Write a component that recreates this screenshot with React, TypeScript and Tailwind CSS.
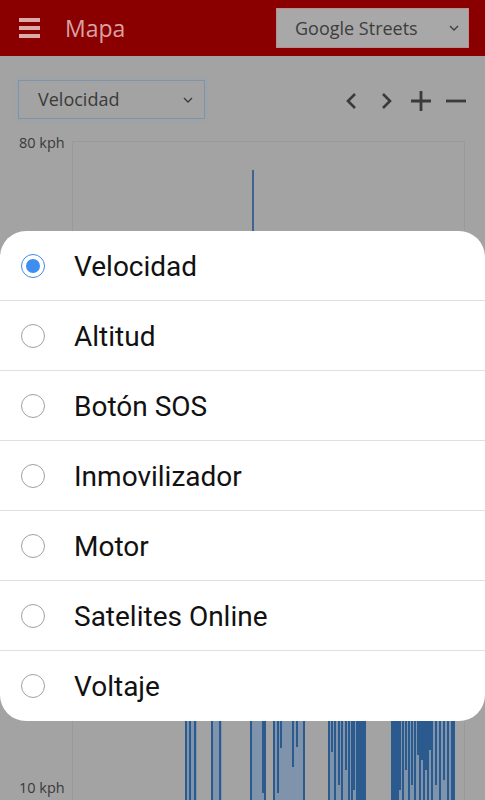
import React from "react";

const options = ["Velocidad", "Altitud", "Botón SOS", "Inmovilizador", "Motor", "Satelites Online", "Voltaje"];

type Grp = { x0: number; x1: number; lines: [number, number][] };
const groups: Grp[] = [
  { x0: 185, x1: 197, lines: [[186, 800], [190, 800], [195, 800]] },
  { x0: 211, x1: 222, lines: [[212, 800], [220, 800]] },
  { x0: 250, x1: 266, lines: [[251, 800], [263, 793], [265, 800]] },
  { x0: 273, x1: 305, lines: [[274, 800], [278, 793], [281, 748], [293, 767], [297, 747], [304, 800]] },
  {
    x0: 328,
    x1: 366,
    lines: [[329, 800], [332, 752], [335, 800], [339, 785], [342, 800], [346, 770], [349, 800], [352, 800], [354, 790], [357, 800], [359, 800], [361, 800], [363, 800], [365, 800]],
  },
  {
    x0: 392,
    x1: 455,
    lines: [[392, 800], [394, 800], [396, 800], [398, 800], [400, 790], [403, 800], [406, 770], [409, 800], [412, 785], [415, 800], [418, 755], [420, 800], [422, 760], [424, 800], [426, 770], [428, 800], [430, 750], [432, 800], [436, 785], [440, 800], [444, 780], [448, 800], [452, 800], [454, 800]],
  },
];

function Radio({ on }: { on: boolean }) {
  return on ? (
    <div className="w-[24px] h-[24px] rounded-full border-[1.5px] border-[#3d8ae6] flex items-center justify-center">
      <div className="w-[14px] h-[14px] rounded-full bg-[#3e8ef0]" />
    </div>
  ) : (
    <div className="w-[24px] h-[24px] rounded-full border-[1.5px] border-[#a0a0a0]" />
  );
}

export default function App() {
  return (
    <div className="relative w-[485px] h-[800px] overflow-hidden bg-[#a3a3a3]" style={{ fontFamily: "'Open Sans', sans-serif" }}>
      <div className="h-[56px] bg-[#8a0000] flex items-center">
        <div className="ml-[19px] w-[21px] flex flex-col gap-[4px]">
          <div className="h-[4px] bg-[#dcaaaa]" />
          <div className="h-[4px] bg-[#dcaaaa]" />
          <div className="h-[4px] bg-[#dcaaaa]" />
        </div>
        <div className="ml-[25px] text-[23px] text-[#d8a2a2] leading-none">Mapa</div>
        <div className="ml-auto mr-[16px] w-[193px] h-[40px] bg-[#a8a8a8] border border-[#b89090] flex items-center pl-[18px] pr-[8px]">
          <span className="text-[18px] text-[#3d3d3d]">Google Streets</span>
          <svg className="ml-auto" width="12" height="8" viewBox="0 0 12 8">
            <path d="M2 2 L6 6 L10 2" stroke="#3d3d3d" strokeWidth="1.3" fill="none" />
          </svg>
        </div>
      </div>

      <div className="flex items-center mt-[24px] pl-[18px] pr-[18px]">
        <div className="w-[187px] h-[39px] border border-[#7f94a8] shadow-[0_0_3px_#8ea2b8] flex items-center pl-[19px] pr-[10px]">
          <span className="text-[18px] text-[#3a3a3a]">Velocidad</span>
          <svg className="ml-auto" width="12" height="8" viewBox="0 0 12 8">
            <path d="M2 2 L6 6 L10 2" stroke="#3a3a3a" strokeWidth="1.3" fill="none" />
          </svg>
        </div>
        <div className="ml-auto flex items-center gap-[12px] text-[#3a3a3a] mt-[2px]">
          <svg width="22" height="22" viewBox="0 0 22 22">
            <path d="M14 4 L7 11 L14 18" stroke="#3a3a3a" strokeWidth="2.6" fill="none" />
          </svg>
          <svg width="22" height="22" viewBox="0 0 22 22">
            <path d="M8 4 L15 11 L8 18" stroke="#3a3a3a" strokeWidth="2.6" fill="none" />
          </svg>
          <svg width="24" height="24" viewBox="0 0 24 24">
            <path d="M12 2 V22 M2 12 H22" stroke="#3a3a3a" strokeWidth="2.8" fill="none" />
          </svg>
          <svg width="22" height="24" viewBox="0 0 22 24">
            <path d="M1 12 H21" stroke="#3a3a3a" strokeWidth="2.8" fill="none" />
          </svg>
        </div>
      </div>

      <div className="flex mt-[22px]">
        <div className="w-[72px] relative">
          <div className="absolute left-[19px] top-[-9px] text-[14.5px] text-[#3a3a3a]">80 kph</div>
          <div className="absolute left-[19px] top-[86px] text-[14.5px] text-[#3a3a3a]">70 kph</div>
          <div className="absolute left-[19px] top-[636px] text-[14.5px] text-[#3a3a3a]">10 kph</div>
        </div>
        <div className="w-[393px] h-[700px] border border-[#9a9a9a]" />
      </div>

      <svg className="absolute left-0 top-0" width="485" height="800" viewBox="0 0 485 800" shapeRendering="crispEdges">
        <line x1="253" y1="170" x2="253" y2="240" stroke="#3f6494" strokeWidth="2" />
        {groups.map((g, i) => (
          <g key={i}>
            <rect x={g.x0} y={715} width={g.x1 - g.x0} height={85} fill="#7f93aa" />
            {g.lines.map(([x, y2], j) => (
              <line key={j} x1={x} y1={715} x2={x} y2={y2} stroke="#2a5a8e" strokeWidth="2" />
            ))}
          </g>
        ))}
      </svg>

      <div className="absolute left-0 right-0 top-[231px] bg-white rounded-[26px] overflow-hidden" style={{ fontFamily: "Roboto, sans-serif" }}>
        {options.map((o, i) => (
          <div key={o} className={`h-[70px] flex items-center ${i < options.length - 1 ? "border-b border-[#e0e0e0]" : ""}`}>
            <div className="ml-[21px]">
              <Radio on={i === 0} />
            </div>
            <span className="ml-[29px] text-[28px] text-[#111111] leading-none mt-[2px]">{o}</span>
          </div>
        ))}
      </div>
    </div>
  );
}
